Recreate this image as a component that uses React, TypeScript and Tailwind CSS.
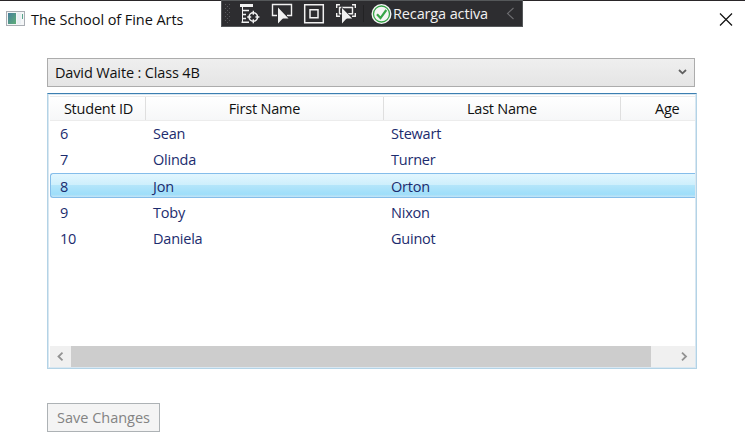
import React from 'react';

const students = [
  { id: 6, first: 'Sean', last: 'Stewart' },
  { id: 7, first: 'Olinda', last: 'Turner' },
  { id: 8, first: 'Jon', last: 'Orton' },
  { id: 9, first: 'Toby', last: 'Nixon' },
  { id: 10, first: 'Daniela', last: 'Guinot' },
];

const columns = 'grid grid-cols-[96px_238px_237px_1fr]';

function AppIcon() {
  return (
    <svg width="19" height="16" viewBox="0 0 19 16" shapeRendering="crispEdges">
      <defs>
        <linearGradient id="pane" x1="0" y1="0" x2="1" y2="1">
          <stop offset="0" stopColor="#467f9c" />
          <stop offset="1" stopColor="#5fae78" />
        </linearGradient>
      </defs>
      <rect x="0.5" y="0.5" width="18" height="14" fill="#f4f6f7" stroke="#a9adb3" />
      <rect x="2" y="2" width="8" height="11" fill="url(#pane)" />
      <rect x="11" y="2" width="4" height="11" fill="#eaeff3" />
      <rect x="16" y="3" width="1" height="5" fill="#5aa58c" />
    </svg>
  );
}

function ToolIcons() {
  return (
    <svg width="154" height="26" viewBox="0 0 154 26" fill="none">
      <g fill="#59595c">
        {[4, 8, 12, 16, 20].map((y) => (
          <g key={y}>
            <rect x="4" y={y} width="1" height="1" />
            <rect x="8" y={y} width="1" height="1" />
            <rect x="6" y={y + 2} width="1" height="1" />
          </g>
        ))}
      </g>
      <g stroke="#f1f1f1" strokeWidth="1.4">
        <path d="M19 4h13v3H19z" fill="#f1f1f1" stroke="none" />
        <path d="M21.5 10.5H28M21.5 14.5H25M21.5 18.5H25M20.5 22.3H28" />
        <path d="M21.5 7V22" strokeWidth="1" />
        <circle cx="32.3" cy="17" r="4.2" strokeWidth="1.6" />
        <path d="M32.3 10.8v4M32.3 19.2v4M26.2 17h4M34.4 17h4" />
        <path d="M56 15.5H51.5V4.5H70.5V15.5H66" />
        <path d="M83.7 4.7h18.6v18h-18.6zM89 9.7h8v8h-8z" strokeWidth="1.5" />
        <path d="M119 4.7H115.7V8M131 4.7H134.3V8M115.7 13V16.3H119M134.3 13V16.3H131" />
        <path d="M118.5 7.5H131.5V13.7H118.5Z" />
      </g>
      <g fill="#f1f1f1" stroke="#2d2d30" strokeWidth="1.4" paintOrder="stroke">
        <path d="M57 7.5V23.5L60.8 19.5L62 18.5H67.5Z" />
        <path d="M121 8V23.5L124.6 19.5L126 18.5H131.2Z" />
      </g>
      <path d="M142.5 5V22" stroke="#222224" />
    </svg>
  );
}

function DebugToolbar() {
  return (
    <div className="absolute left-[221px] top-0 flex h-[27px] w-[302px] items-center border border-[#55585a] bg-[#2d2d30]">
      <div className="-ml-px -mt-px h-[26px] w-[150px] overflow-hidden"><ToolIcons /></div>
      <svg className="shrink-0" width="21" height="22" viewBox="0 0 21 22">
        <circle cx="10.5" cy="11" r="10" fill="#f5f5f5" />
        <circle cx="10.5" cy="11" r="8" fill="none" stroke="#36a447" strokeWidth="1.3" />
        <path d="M6 11.3l3.5 3.8L15.3 7" fill="none" stroke="#36a447" strokeWidth="2.2" />
      </svg>
      <span className="ml-px whitespace-nowrap text-[14.5px] tracking-[-0.13px] text-[#f1f1f1]">Recarga activa</span>
      <svg className="ml-auto mr-[7px]" width="9" height="13" viewBox="0 0 9 13" fill="none" stroke="#6d6d70" strokeWidth="1.1">
        <path d="M7.5 1L1.5 6.5L7.5 12" />
      </svg>
    </div>
  );
}

function TitleBar() {
  return (
    <header className="flex h-[58px] items-start border-t border-[#2a2629]">
      <div className="ml-[6px] mt-[10px]"><AppIcon /></div>
      <h1 className="ml-[6px] mt-[9px] whitespace-nowrap leading-5 tracking-[-0.07px]">The School of Fine Arts</h1>
      <svg className="ml-auto mr-[12px] mt-[12px]" width="14" height="13" viewBox="0 0 14 13" stroke="#111" strokeWidth="1.2">
        <path d="M1 0.5L13 12.5M13 0.5L1 12.5" />
      </svg>
    </header>
  );
}

function StudentTable() {
  return (
    <section className="mt-[6px] flex h-[276px] w-[650px] flex-col border border-[#b3d3e6] border-t-[#3c7fb1] shadow-[inset_0_0_0_1px_#d9e7f1] pb-px pl-[2px] pr-px pt-[2px]">
      <div className={columns + ' h-[25px] shrink-0 border-b border-t border-[#ececec] bg-gradient-to-b from-white to-[#f6f7f8] text-center leading-[23px] tracking-[-0.22px]'}>
        <div className="border-r border-[#dfdfdf] pl-[2px]">Student ID</div>
        <div className="border-r border-[#dfdfdf]">First Name</div>
        <div className="border-r border-[#dfdfdf]">Last Name</div>
        <div className="pl-[34px] text-left">Age</div>
      </div>
      <div className="flex-1 tracking-[-0.22px] text-[#1c2c6e]">
        {students.map((s) => (
          <div
            key={s.id}
            className={
              columns +
              ' mb-[1.2px] h-[25px] rounded-l-[3px] border border-r-0 ' +
              (s.id === 8
                ? 'border-[#84bdea] bg-[linear-gradient(#e2f6fe_0%,#cdeffc_48%,#b3e5fa_50%,#9edefa_88%,#c3e4f6_100%)] leading-[26px]'
                : 'border-transparent leading-6')
            }
          >
            <span className="pl-[9px]">{s.id}</span>
            <span className="pl-[6px]">{s.first}</span>
            <span className="pl-[6px]">{s.last}</span>
          </div>
        ))}
      </div>
      <div className="flex h-[21px] shrink-0 bg-[#f0f0f0]">
        <div className="flex w-[21px] items-center justify-center">
          <svg width="8" height="9" viewBox="0 0 8 9" fill="none" stroke="#929292" strokeWidth="1.8"><path d="M5.5 .7L1.5 4.5L5.5 8.3" /></svg>
        </div>
        <div className="w-[580px] bg-[#cdcdcd]" />
        <div className="ml-auto flex w-[21px] items-center justify-center">
          <svg width="8" height="9" viewBox="0 0 8 9" fill="none" stroke="#929292" strokeWidth="1.8"><path d="M1 .7L5 4.5L1 8.3" /></svg>
        </div>
      </div>
    </section>
  );
}

export default function App() {
  return (
    <div className="relative h-[440px] w-[745px] overflow-hidden bg-white font-['Open_Sans','Noto_Sans',sans-serif] text-[14.5px] tracking-[-0.15px] text-[#111]">
      <TitleBar />
      <DebugToolbar />
      <main className="flex flex-col items-start pl-[47px]">
        <div className="flex h-[29px] w-[648px] items-center justify-between border border-[#acacac] bg-gradient-to-b from-[#efefef] to-[#e5e5e5] pl-[7px] pr-[7px]">
          <span>David Waite : Class 4B</span>
          <svg className="-mt-[2px]" width="9" height="6" viewBox="0 0 9 6" fill="none" stroke="#606060" strokeWidth="1.8"><path d="M1 1L4.5 4.3L8 1" /></svg>
        </div>
        <StudentTable />
        <button disabled className="mt-[34px] flex h-[29px] w-[113px] items-center justify-center whitespace-nowrap border border-[#adb2b5] bg-[#f4f4f4] tracking-normal text-[#838383]">Save Changes</button>
      </main>
    </div>
  );
}
